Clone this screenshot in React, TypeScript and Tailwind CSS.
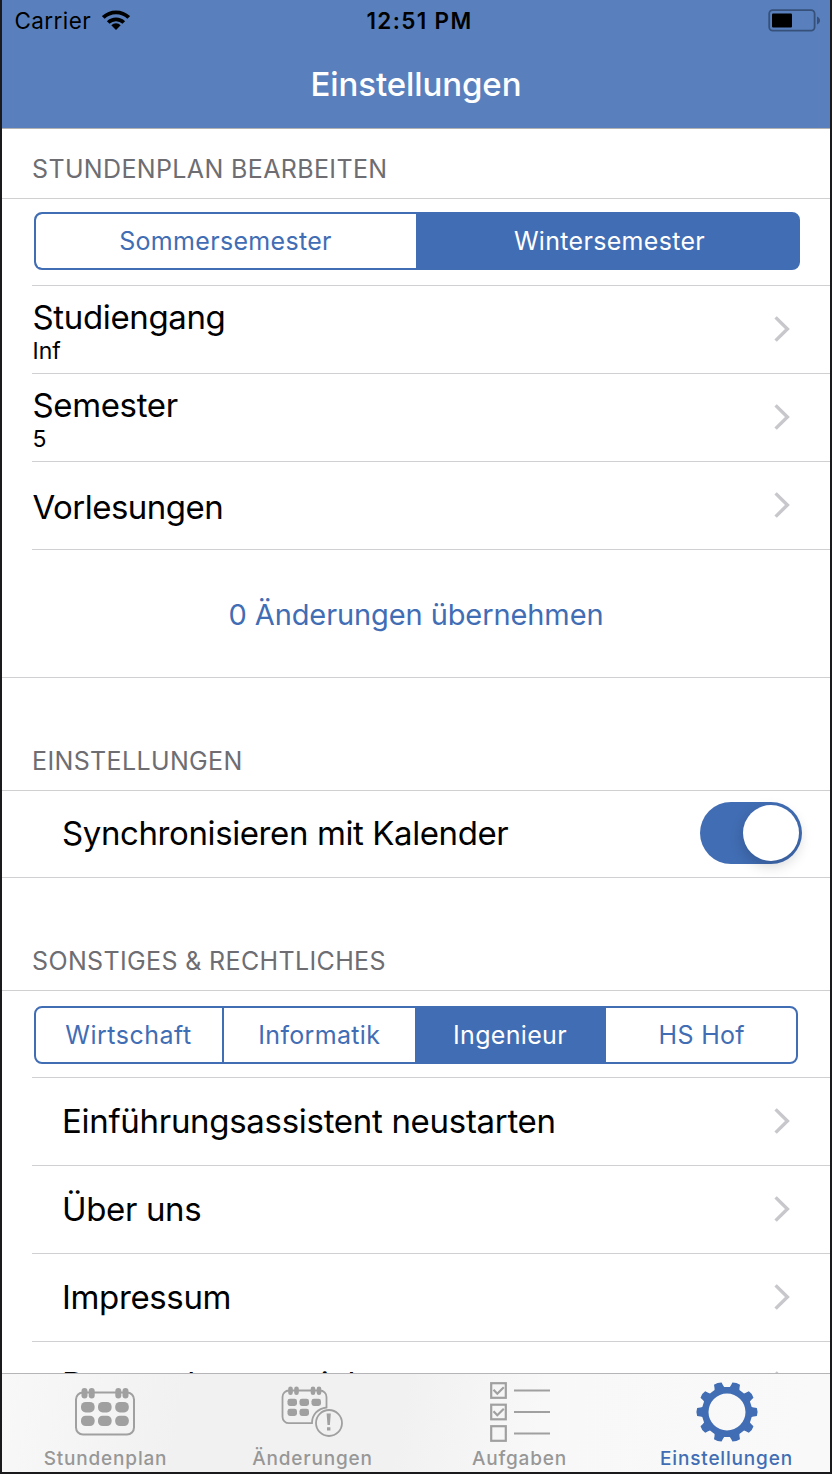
import React from "react";

const Chevron = () => (
  <svg className="mr-10 mb-[2px] h-7 w-4 shrink-0" viewBox="0 0 16 28" fill="none" stroke="#c7c7cc" strokeWidth="3.4">
    <path d="M1.6 2.4 L13.4 14 L1.6 25.6" />
  </svg>
);

type RowProps = { title: string; sub?: string; indent?: boolean; className?: string; tracking?: string };

const Row = ({ title, sub, indent, className = "h-[88px]", tracking = "tracking-[-0.36px]" }: RowProps) => (
  <div className={`ml-[30px] flex shrink-0 items-center justify-between border-b border-[#d0d0d3] ${className}`}>
    <div className={indent ? "pb-[2px] pl-[30px]" : "pt-[2px] pl-[0.5px]"}>
      <div className={`text-[33px] text-black ${tracking} ${sub ? "leading-[42px]" : "leading-10"}`}>{title}</div>
      {sub && <div className="text-[23px] leading-[27px] text-black">{sub}</div>}
    </div>
    <Chevron />
  </div>
);

const SectionHeader = ({ children, first }: { children: React.ReactNode; first?: boolean }) => (
  <div
    className={`flex shrink-0 items-end border-b border-[#d0d0d3] pb-3 pl-[30px] text-[25px] leading-[34px] tracking-[0.36px] text-[#6d6d72] ${first ? "h-[70px]" : "h-[113px]"}`}
  >
    {children}
  </div>
);

const Calendar = () => (
  <svg className="mr-[1px]" width="62" height="50" viewBox="0 0 62 50" fill="#a0a0a0">
    <rect x="2" y="5.5" width="58" height="42" rx="7" fill="none" stroke="#a0a0a0" strokeWidth="2" />
    {[10.5, 17.7, 44.3, 51.5].map((x) => (
      <rect key={x} x={x - 3} y="1" width="6" height="10.5" rx="3" />
    ))}
    {[7, 24, 41.2].map((x) =>
      [15, 28.7].map((y) => <rect key={`${x}-${y}`} x={x} y={y} width="13.6" height="10.4" rx="4.6" />),
    )}
  </svg>
);

const CalendarAlert = () => (
  <svg className="mr-[1px] mb-[2px]" width="62" height="52" viewBox="0 0 62 52" fill="#a0a0a0">
    <path
      d="M31 38.2H8a6.5 6.5 0 0 1-6.5-6.5V12A6.5 6.5 0 0 1 8 5.5h31a6.5 6.5 0 0 1 6.5 6.5v10.5C37 23.5 31 29.5 31 38.2Z"
      fill="none"
      stroke="#a0a0a0"
      strokeWidth="1.8"
    />
    {[9.5, 15.5, 32, 38].map((x) => (
      <rect key={x} x={x - 2.3} y="1.5" width="4.6" height="8.5" rx="2.3" />
    ))}
    {[6.5, 18.5, 30.5].map((x) => (
      <rect key={x} x={x} y="13.8" width="9.5" height="7.2" rx="2.4" />
    ))}
    {[6.5, 18.5].map((x) => (
      <rect key={x} x={x} y="23.8" width="9.5" height="7.2" rx="2.4" />
    ))}
    <circle cx="48" cy="38" r="13" fill="none" stroke="#a0a0a0" strokeWidth="1.8" />
    <path d="M45.6 28.5h4.2l-.9 11.5h-2.4zM46 42.2h3.4v3.4H46z" />
  </svg>
);

const Checklist = () => (
  <svg width="60" height="60" viewBox="0 0 60 60" fill="none" stroke="#a0a0a0" strokeWidth="2.2">
    {[1, 22.5, 44].map((y, i) => (
      <g key={y} transform={`translate(0 ${y})`}>
        <rect x="1.2" y="0.2" width="14.6" height="14.6" />
        {i < 2 && <path d="M3.5 6.8L7.3 10.7L13.8 4.2" />}
        <path d="M24 7.5H60" />
      </g>
    ))}
  </svg>
);

const gearPoints = Array.from({ length: 10 }, (_, i) =>
  [
    [-11.5, 25.2],
    [-9.5, 27],
    [-7.6, 30.1],
    [0, 30.6],
    [7.6, 30.1],
    [9.5, 27],
    [11.5, 25.2],
  ]
    .map(([deg, r]) => {
      const a = ((i * 36 + deg) * Math.PI) / 180;
      return `${(31 + r * Math.cos(a)).toFixed(2)},${(31 + r * Math.sin(a)).toFixed(2)}`;
    })
    .join(" L"),
).join(" L");

const Gear = () => (
  <svg width="62" height="62" viewBox="0 0 62 62" fill="#416db4">
    <path fillRule="evenodd" d={`M${gearPoints}Z M31 12.5a18.5 18.5 0 1 0 0 37a18.5 18.5 0 1 0 0-37Z`} />
  </svg>
);

const tabs = [
  { label: "Stundenplan", icon: <Calendar /> },
  { label: "Änderungen", icon: <CalendarAlert /> },
  { label: "Aufgaben", icon: <Checklist /> },
  { label: "Einstellungen", icon: <Gear />, active: true },
];

export default function App() {
  return (
    <div className="flex h-[1474px] w-[832px] flex-col overflow-hidden border-x-2 border-b-2 border-[#1a1a1d] bg-white font-['Inter',sans-serif]">
      <header className="flex h-[129px] shrink-0 flex-col border-b border-[#b2b2b2] bg-[#5980bd]">
        <div className="grid h-10 grid-cols-3 items-center text-[22.5px] text-black">
          <div className="flex items-center pl-[12.5px]">
            <span className="pt-[2px] tracking-[0.4px]">Carrier</span>
            <svg className="ml-[10.5px]" width="28" height="20" viewBox="0 0 28 20" fill="none" stroke="#000" strokeWidth="3.8">
              <path d="M1.3 7.5A18.3 18.3 0 0 1 26.7 7.5" />
              <path d="M6.2 12.5A11.2 11.2 0 0 1 21.8 12.5" />
              <path d="M14 20L9.3 15.3A6.7 6.7 0 0 1 18.7 15.3Z" fill="#000" stroke="none" />
            </svg>
          </div>
          <div className="pt-[2px] pl-[7px] text-center font-semibold tracking-[1.35px]">12:51 PM</div>
          <div className="flex justify-end pr-[9px]">
            <svg width="53" height="23" viewBox="0 0 53 23">
              <rect x="1.2" y="1.2" width="45.4" height="20.4" rx="3.5" fill="none" stroke="#36507a" strokeWidth="1.8" />
              <rect x="4" y="4.5" width="20" height="14" rx="1" />
              <path d="M49 7.5c4 1.5 4 6.5 0 8z" fill="#36507a" />
            </svg>
          </div>
        </div>
        <h1 className="pt-[22px] text-center text-[33px] leading-[44px] font-medium tracking-[-0.1px] text-white">Einstellungen</h1>
      </header>

      <main className="flex h-[1244px] shrink-0 flex-col overflow-hidden">
        <SectionHeader first>STUNDENPLAN BEARBEITEN</SectionHeader>
        <div className="ml-[30px] h-[87px] shrink-0 border-b border-[#d0d0d3] pt-[13px] pl-[2px]">
          <div className="grid h-[58px] w-[766px] grid-cols-[380px_1fr] overflow-hidden rounded-[8px] border-2 border-[#416db4] bg-[#416db4] text-center text-[25px] leading-[54px] tracking-[0.32px]">
            <div className="rounded-l-[6px] bg-white pr-[1px] text-[#416db4]">Sommersemester</div>
            <div className="pl-[5px] text-white">Wintersemester</div>
          </div>
        </div>
        <Row title="Studiengang" sub="Inf" />
        <Row title="Semester" sub="5" />
        <Row title="Vorlesungen" tracking="tracking-[-0.52px]" />
        <div className="flex h-32 shrink-0 items-center justify-center border-b border-[#d0d0d3] pt-[2px] text-[29px] tracking-[-0.1px] text-[#416db4]">
          0 Änderungen übernehmen
        </div>
        <SectionHeader>EINSTELLUNGEN</SectionHeader>
        <div className="flex h-[87px] shrink-0 items-center justify-between border-b border-[#d0d0d3] pr-7 pl-[60px]">
          <span className="text-[33px] tracking-[-0.4px] text-black">Synchronisieren mit Kalender</span>
          <div className="mb-[2px] flex h-[62px] w-[102px] items-center justify-end rounded-full bg-[#416db4] pr-[3px]">
            <div className="size-14 rounded-full bg-white shadow-[0_5px_14px_rgba(0,0,0,0.18)]" />
          </div>
        </div>
        <SectionHeader>SONSTIGES &amp; RECHTLICHES</SectionHeader>
        <div className="ml-[30px] h-[87px] shrink-0 border-b border-[#d0d0d3] pt-[15px] pl-[2px]">
          <div className="grid h-[58px] w-[764px] grid-cols-[188px_190.5px_191px_1fr] overflow-hidden rounded-[8px] border-2 border-[#416db4] text-center text-[25px] leading-[54px] tracking-[0.32px] text-[#416db4]">
            <div className="border-r-2 border-[#416db4] pr-[1px] tracking-[0.5px]">Wirtschaft</div>
            <div>Informatik</div>
            <div className="bg-[#416db4] text-white">Ingenieur</div>
            <div className="pl-[2px]">HS Hof</div>
          </div>
        </div>
        <Row indent title="Einführungsassistent neustarten" tracking="tracking-[-0.3px]" />
        <Row indent title="Über uns" />
        <Row indent title="Impressum" />
        <Row indent title="Datenschutzvereinbarung" className="h-[86px]" />
      </main>

      <nav className="grid h-[99px] shrink-0 grid-cols-4 border-t border-[#b5b5b7] bg-[linear-gradient(100deg,#f8f8f8_0%,#f1f1f1_22%,#f1f1f1_48%,#f8f8f8_65%,#f9f9f9_100%)]">
        {tabs.map((t) => (
          <div key={t.label} className="flex flex-col items-center">
            <div className="flex h-[76px] items-center justify-center">{t.icon}</div>
            <div className={`-mt-[3px] text-[19px] leading-6 font-medium tracking-[0.82px] ${t.active ? "text-[#416db4]" : "text-[#979797]"}`}>
              {t.label}
            </div>
          </div>
        ))}
      </nav>
    </div>
  );
}
